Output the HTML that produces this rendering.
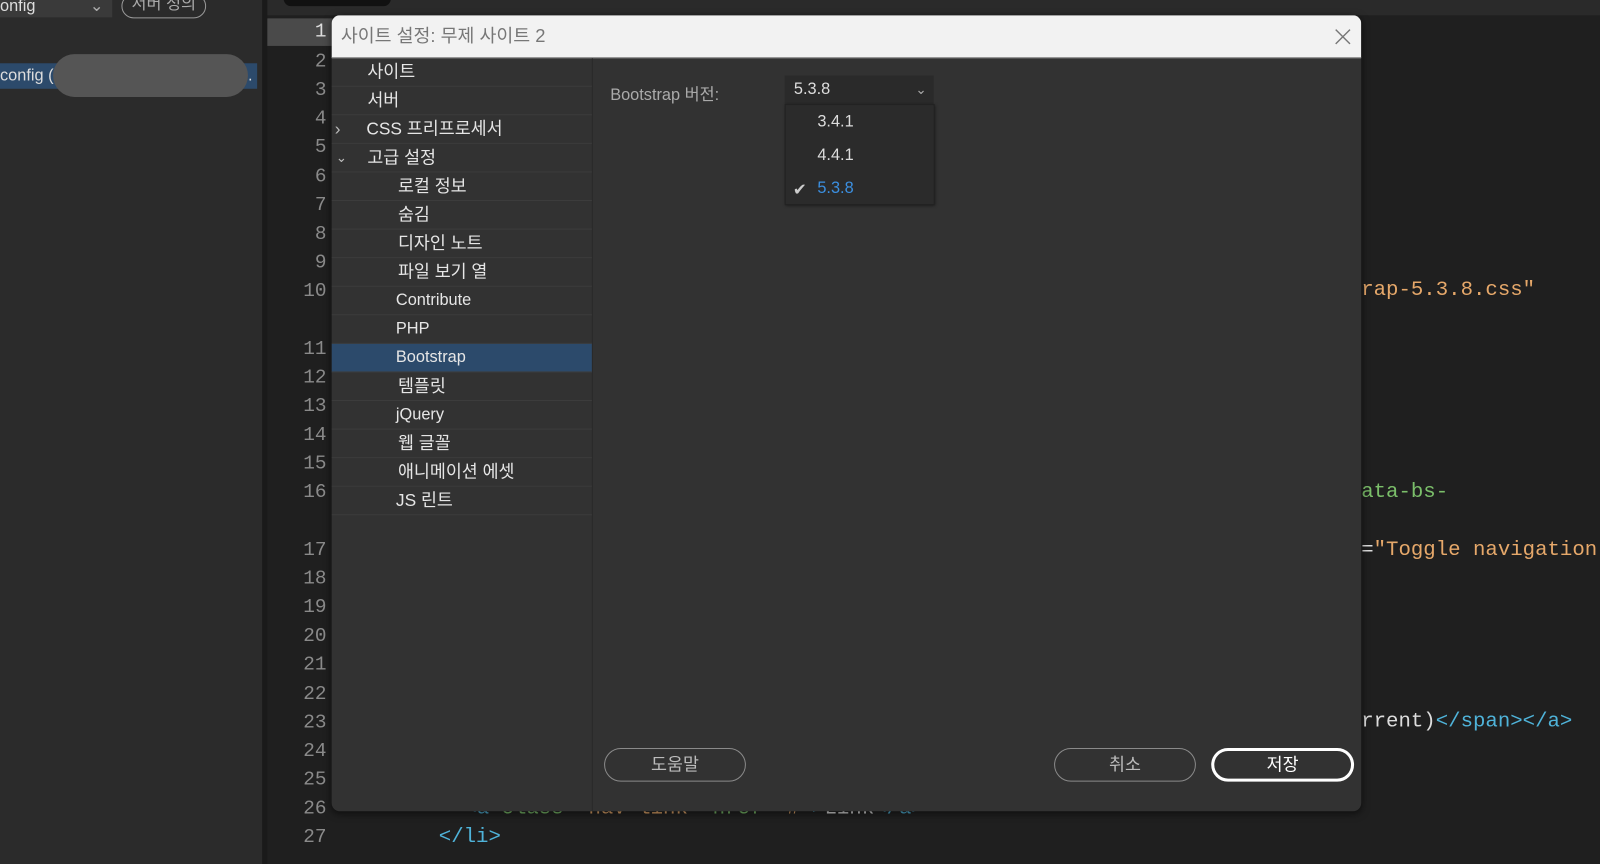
<!DOCTYPE html>
<html><head><meta charset="utf-8"><style>
*{margin:0;padding:0;box-sizing:border-box}
body{width:1600px;height:847px;overflow:hidden;background:#1f1f1f;font-family:"Liberation Sans","Noto Sans CJK KR",sans-serif;position:relative;color:#ddd}
#w{position:absolute;left:0;top:0;width:1568px;height:830px;transform:scale(1.0204);transform-origin:0 0}
.abs{position:absolute}
.ln{position:absolute;left:262px;width:64px;text-align:right;padding-right:6px;font-family:"Liberation Mono",monospace;font-size:19px;color:#8a8a8a}
.code{position:absolute;font-family:"Liberation Mono","DejaVu Sans Mono",monospace;font-size:20.3px;white-space:pre}
.tree div{height:28px;border-bottom:1px solid #3c3c3c;font-size:17px;color:#e6e6e6;line-height:28px;white-space:nowrap}
.btn{position:absolute;height:33px;border:1px solid #8a8a8a;border-radius:17px;text-align:center;line-height:31px;font-size:17px;color:#bbb}
</style></head><body><div id="w">
<div class="abs" style="left:0;top:0;width:257px;height:847px;background:#2b2b2b"></div>
<div class="abs" style="left:257px;top:0;width:5px;height:847px;background:#1a1a1a"></div>
<div class="abs" style="left:0;top:0;width:110px;height:17px;background:#3a3a3a;font-size:16px;line-height:14px;color:#ddd">onfig<span style="position:absolute;left:88px;color:#aaa">⌄</span></div>
<div class="abs" style="left:119px;top:-6px;width:83px;height:24px;border:1px solid #999;border-radius:12px;font-size:16px;color:#aaa;text-align:center;line-height:20px">서버 정의</div>
<div class="abs" style="left:0;top:62px;width:252px;height:25px;background:#2c4a6b;font-size:16px;line-height:25px;color:#ddd">config (<span style="position:absolute;left:243px">.</span></div>
<div class="abs" style="left:52px;top:53px;width:191px;height:42px;border-radius:21px;background:#555"></div>
<div class="abs" style="left:262px;top:0;width:1338px;height:15px;background:#2a2a2a"></div>
<div class="abs" style="left:278px;top:-8px;width:105px;height:14px;border-radius:7px;background:#111"></div>
<div class="abs" style="left:262px;top:18px;width:64px;height:27px;background:#4a4a4a"></div>
<div class="ln" style="top:20px;color:#ddd">1</div>
<div class="ln" style="top:49px">2</div><div class="ln" style="top:77px">3</div><div class="ln" style="top:105px">4</div><div class="ln" style="top:133px">5</div><div class="ln" style="top:162px">6</div><div class="ln" style="top:190px">7</div><div class="ln" style="top:218px">8</div><div class="ln" style="top:246px">9</div><div class="ln" style="top:274px">10</div><div class="ln" style="top:331px">11</div><div class="ln" style="top:359px">12</div><div class="ln" style="top:387px">13</div><div class="ln" style="top:415px">14</div><div class="ln" style="top:443px">15</div><div class="ln" style="top:471px">16</div><div class="ln" style="top:528px">17</div><div class="ln" style="top:556px">18</div><div class="ln" style="top:584px">19</div><div class="ln" style="top:612px">20</div><div class="ln" style="top:640px">21</div><div class="ln" style="top:669px">22</div><div class="ln" style="top:697px">23</div><div class="ln" style="top:725px">24</div><div class="ln" style="top:753px">25</div><div class="ln" style="top:781px">26</div><div class="ln" style="top:809px">27</div>
<div class="code" style="left:1334px;top:273px;color:#e6a86a">rap-5.3.8.css"</div>
<div class="code" style="left:1334px;top:471px;color:#7bbf6a">ata-bs-</div>
<div class="code" style="left:1334px;top:528px;color:#e6a86a"><span style="color:#ddd">=</span>"Toggle navigation</div>
<div class="code" style="left:1334px;top:696px;color:#ddd">rrent)<span style="color:#4fb3d9">&lt;/span&gt;&lt;/a&gt;</span></div>
<div class="code" style="left:455px;top:781px;color:#4fb3d9">&lt;a <span style="color:#7bbf6a">class</span><span style="color:#ddd">=</span><span style="color:#e6a86a">"nav-link"</span> <span style="color:#7bbf6a">href</span><span style="color:#ddd">=</span><span style="color:#e6a86a">"#"</span>&gt;<span style="color:#ddd">Link</span>&lt;/a&gt;</div>
<div class="code" style="left:430px;top:809px;color:#4fb3d9">&lt;/li&gt;</div>

<div class="abs" style="left:325px;top:15px;width:1009px;height:780px;background:#323232;border-radius:8px;box-shadow:0 2px 8px rgba(0,0,0,.6);overflow:hidden">
 <div class="abs" style="left:0;top:0;width:1009px;height:42px;background:#f2f2f2;border-bottom:1px solid #888;font-size:18px;color:#777;line-height:40px;padding-left:9px">사이트 설정: 무제 사이트 2
  <svg class="abs" style="left:982px;top:12px" width="18" height="18" viewBox="0 0 18 18"><path d="M2 2L16 16M16 2L2 16" stroke="#777" stroke-width="1.4"/></svg>
 </div>
 <div class="abs tree" style="left:0;top:42px;width:256px;height:738px;border-right:1px solid #2a2a2a">
  <div style="padding-left:35px">사이트</div>
  <div style="padding-left:35px">서버</div>
  <div style="padding-left:34px;position:relative"><span style="position:absolute;left:3px;color:#bbb">›</span>CSS 프리프로세서</div>
  <div style="padding-left:35px;position:relative"><span style="position:absolute;left:4px;color:#bbb;font-size:13px">⌄</span>고급 설정</div>
  <div style="padding-left:65px">로컬 정보</div>
  <div style="padding-left:65px">숨김</div>
  <div style="padding-left:65px">디자인 노트</div>
  <div style="padding-left:65px">파일 보기 열</div>
  <div style="padding-left:63px;font-size:16px">Contribute</div>
  <div style="padding-left:63px;font-size:16px">PHP</div>
  <div style="padding-left:63px;font-size:16px;background:#2c4a6b">Bootstrap</div>
  <div style="padding-left:65px">템플릿</div>
  <div style="padding-left:63px;font-size:16px">jQuery</div>
  <div style="padding-left:65px">웹 글꼴</div>
  <div style="padding-left:65px">애니메이션 에셋</div>
  <div style="padding-left:63px">JS 린트</div>
 </div>
 <div class="abs" style="left:273px;top:64px;font-size:16px;color:#aaa">Bootstrap 버전:</div>
 <div class="abs" style="left:444px;top:59px;width:146px;height:28px;background:#2a2a2a;font-size:16px;color:#ddd;line-height:28px;padding-left:9px">5.3.8<span style="position:absolute;right:7px;color:#aaa;font-size:13px">⌄</span></div>
 <div class="abs" style="left:444px;top:87px;width:147px;height:99px;background:#2b2b2b;border:1px solid #222;box-shadow:1px 1px 3px rgba(0,0,0,.5);font-size:16px;color:#ddd">
  <div class="abs" style="left:31px;top:8px">3.4.1</div>
  <div class="abs" style="left:31px;top:41px">4.4.1</div>
  <div class="abs" style="left:31px;top:73px;color:#3b8fe0">5.3.8</div>
  <div class="abs" style="left:7px;top:73px;color:#ccc">✔</div>
 </div>
 <div class="btn" style="left:267px;top:718px;width:139px">도움말</div>
 <div class="btn" style="left:708px;top:718px;width:139px">취소</div>
 <div class="btn" style="left:862px;top:718px;width:140px;border:3px solid #fff;color:#fff;line-height:27px">저장</div>
</div>
</div></body></html>
